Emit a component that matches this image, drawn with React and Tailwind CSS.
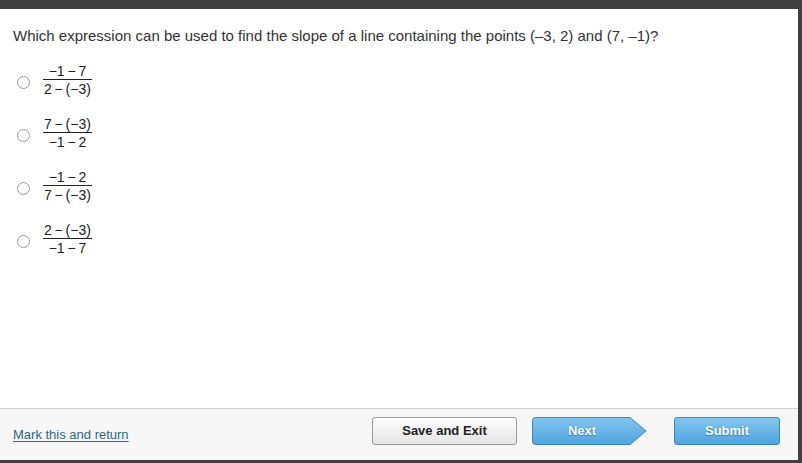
import React from "react";

const options = [
  ["−1\u2009−\u20097", "2\u2009−\u2009(−3)"],
  ["7\u2009−\u2009(−3)", "−1\u2009−\u20092"],
  ["−1\u2009−\u20092", "7\u2009−\u2009(−3)"],
  ["2\u2009−\u2009(−3)", "−1\u2009−\u20097"],
];

function Frac({ n, d }) {
  return (
    <div className="inline-flex flex-col items-stretch text-center text-[14px] leading-[16px] text-[#222]">
      <span className="px-[1px] border-b border-[#222]">{n}</span>
      <span className="px-[1px] pt-[1px]">{d}</span>
    </div>
  );
}

export default function App() {
  return (
    <div
      className="w-[802px] h-[463px] bg-[#404040] flex flex-col overflow-hidden"
      style={{ fontFamily: '"Liberation Sans", Arial, sans-serif' }}
    >
      <div className="h-[9px] shrink-0" />
      <div className="flex-1 flex flex-col bg-white mr-[4px]">
        <div className="flex-1 flex flex-col">
          <p className="pl-[13px] pt-[18px] text-[15px] leading-[18px] text-[#333]">
            Which expression can be used to find the slope of a line containing the points (–3, 2) and (7, –1)?
          </p>
          <div className="flex flex-col pt-[14px] gap-[19px]">
            {options.map(([n, d], i) => (
              <div key={i} className="flex items-start pl-[17px] h-[34px]">
                <span className="mt-[17px] w-[13px] h-[13px] rounded-full border border-[#9a9a9a] bg-white shrink-0" />
                <span className="ml-[13px]">
                  <Frac n={n} d={d} />
                </span>
              </div>
            ))}
          </div>
        </div>
        <div className="h-[52px] shrink-0 border-t border-[#d4d4d4] bg-[#f7f7f7] flex items-start pl-[13px] pr-[18px] pt-[8px]">
          <a className="text-[13px] leading-[16px] text-[#2a6a86] underline underline-offset-2 mt-[10px]" href="#">
            Mark this and return
          </a>
          <div className="flex-1" />
          <button className="w-[145px] h-[28px] rounded-[3px] border border-[#9a9a9a] bg-gradient-to-b from-[#ffffff] to-[#e4e4e4] text-[13px] font-bold text-[#222]">
            Save and Exit
          </button>
          <div className="relative w-[115px] h-[28px] ml-[15px] flex items-center">
            <svg className="absolute inset-0" width="115" height="28" viewBox="0 0 115 28">
              <defs>
                <linearGradient id="nx" x1="0" y1="0" x2="0" y2="1">
                  <stop offset="0" stopColor="#84c6ef" />
                  <stop offset="1" stopColor="#4da4df" />
                </linearGradient>
              </defs>
              <path
                d="M3.5 0.5 H98 L114 14 L98 27.5 H3.5 Q0.5 27.5 0.5 24.5 V3.5 Q0.5 0.5 3.5 0.5 Z"
                fill="url(#nx)"
                stroke="#3b86bd"
              />
            </svg>
            <span
              className="relative w-[100px] text-center text-[13px] font-bold text-white"
              style={{ textShadow: "0 0 1px #3a7fb0, 0 1px 1px #3a7fb0" }}
            >
              Next
            </span>
          </div>
          <button
            className="ml-[27px] w-[106px] h-[28px] rounded-[3px] border border-[#3b86bd] bg-gradient-to-b from-[#84c6ef] to-[#4da4df] text-[13px] font-bold text-white"
            style={{ textShadow: "0 0 1px #3a7fb0, 0 1px 1px #3a7fb0" }}
          >
            Submit
          </button>
        </div>
      </div>
      <div className="h-[3px] shrink-0" />
    </div>
  );
}
